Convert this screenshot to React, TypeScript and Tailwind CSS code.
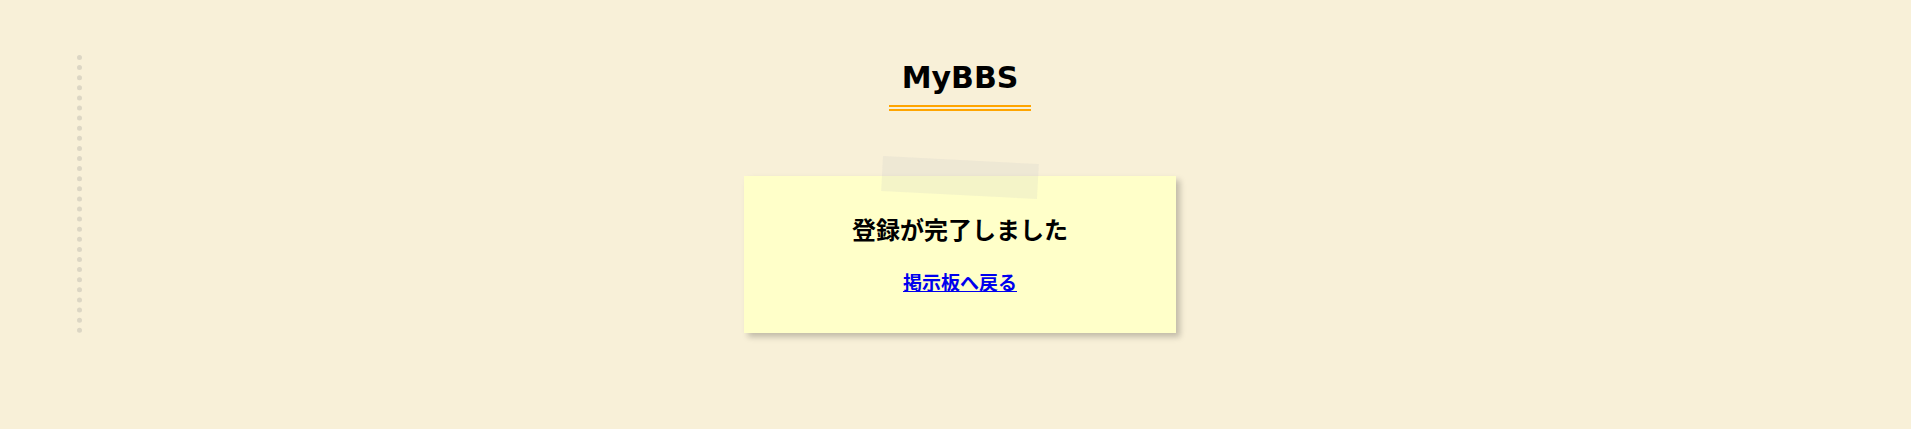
import React from 'react';

export default function App() {
  return (
    <div
      className="min-h-[429px] w-full bg-[#f8f0d8] pt-[55px] pl-[77px] pr-[73px]"
      style={{ fontFamily: '"DejaVu Sans", "Noto Sans CJK JP", sans-serif' }}>

      <div className="border-l-[5px] border-dotted border-[#dcd6c4] flex flex-col items-center">
        <h1 className="mt-[5px] px-[13px] pb-[9px] border-b-[6px] border-double border-[#ffa500] text-[30px] leading-[36px] font-bold text-black">
          MyBBS
        </h1>

        <div className="relative mt-[65px] w-[432px] h-[157px] bg-[#ffffc9] shadow-[4px_4px_6px_rgba(0,0,0,0.22)] flex flex-col items-center"
          style={{ fontFamily: '"Noto Sans CJK JP", sans-serif' }}>
          <div className="absolute left-1/2 top-[-16px] w-[156px] h-[35px] -translate-x-1/2 rotate-[3deg] bg-[rgba(200,200,200,0.2)]" />
          <h2 className="mt-[35px] text-[24px] leading-[36px] font-bold text-black">
            登録が完了しました
          </h2>
          <a href="#" className="mt-[21px] text-[19px] leading-[28px] font-bold text-[#0000ee] underline">
            掲示板へ戻る
          </a>
        </div>
      </div>
    </div>);

}
